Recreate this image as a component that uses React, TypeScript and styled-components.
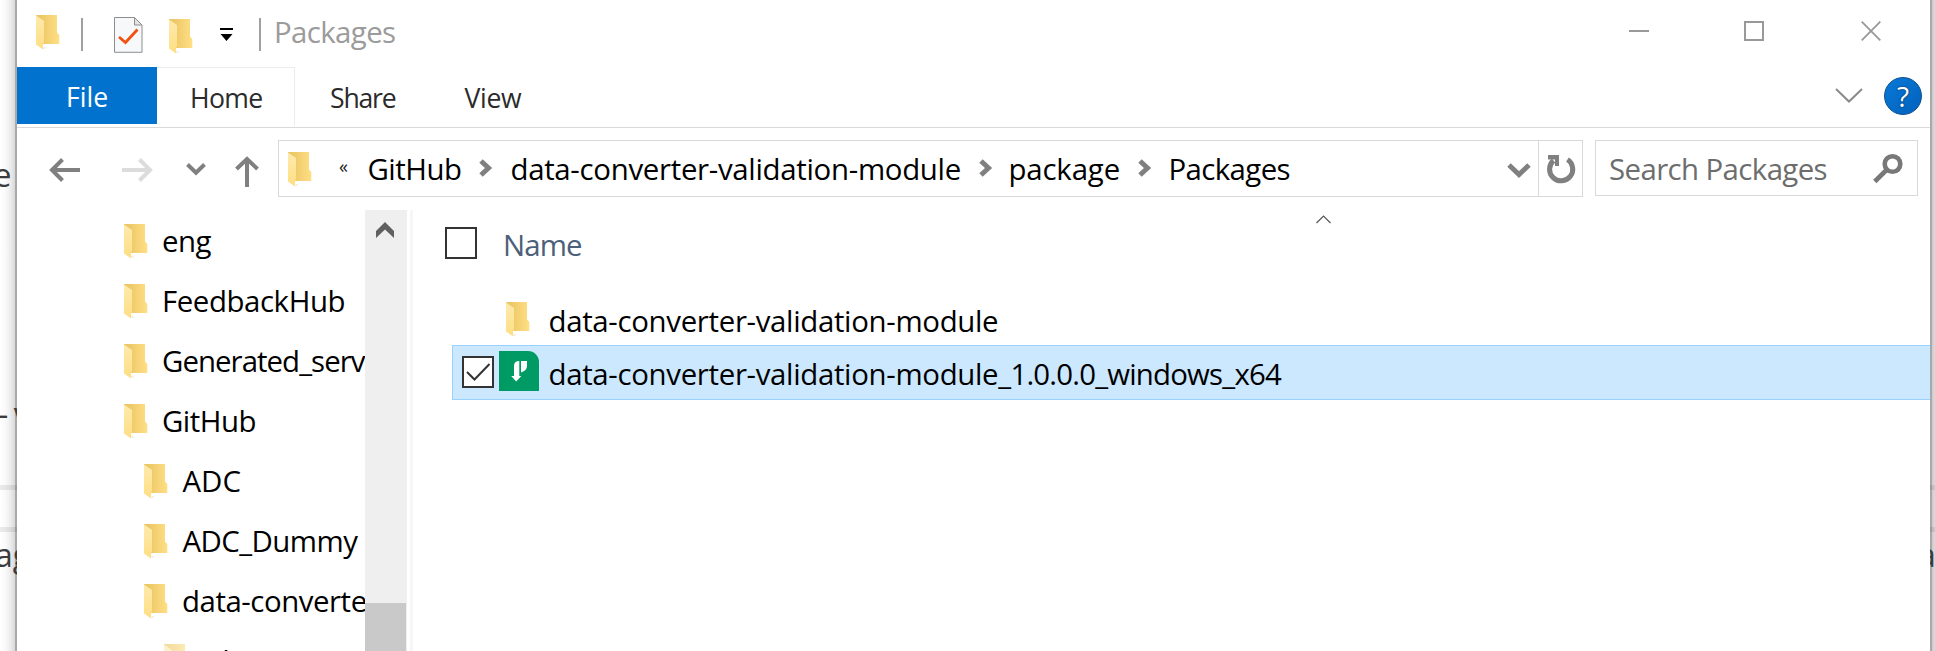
import React from "react";
import styled, { createGlobalStyle } from "styled-components";

const GlobalStyle = createGlobalStyle`
  * { box-sizing: border-box; }
  body {
    margin: 0;
    background: #fff;
    overflow: hidden;
    font-family: "Open Sans", "Noto Sans", sans-serif;
  }
`;

/* ---------- shared pieces ---------- */

type Place = { $left?: number; $top?: number };

const Icon = styled.svg<Place>`
  display: block;
  flex: none;
  overflow: visible;
  margin-left: ${(p) => p.$left ?? 0}px;
  margin-top: ${(p) => p.$top ?? 0}px;
`;

const Label = styled.span<Place & { $spacing?: number; $color?: string }>`
  display: block;
  flex: none;
  font-size: 29.4px;
  line-height: 40px;
  white-space: pre;
  color: ${(p) => p.$color ?? "#000"};
  letter-spacing: ${(p) => p.$spacing ?? 0}px;
  margin-left: ${(p) => p.$left ?? 0}px;
  margin-top: ${(p) => p.$top ?? 0}px;
`;

/* ---------- page behind the window ---------- */

const Desktop = styled.div`
  display: flex;
  width: 1935px;
  height: 651px;
  overflow: hidden;
`;

const Strip = styled.div<{ $side: "left" | "right" }>`
  flex: none;
  width: ${(p) => (p.$side === "left" ? 17 : 5)}px;
  height: 651px;
  overflow: hidden;
  display: flex;
  flex-direction: column;
  background: ${(p) =>
    p.$side === "left"
      ? "linear-gradient(to right, #ffffff 0, #fafafa 5px, #eeeeee 10px, #d8d8d8 15px, #a9a9a9 15px)"
      : "linear-gradient(to right, #a9a9a9 2px, #cbcbcb 2px, #dcdcdc 5px)"};
`;

const Fragment = styled.div<{ $top: number; $left: number; $gap?: number }>`
  display: flex;
  flex: none;
  gap: ${(p) => p.$gap ?? 0}px;
  height: 43px;
  margin-top: ${(p) => p.$top}px;
  margin-left: ${(p) => p.$left}px;
  font-size: 32px;
  line-height: 43px;
  color: #3c3c3c;
  white-space: pre;
`;

const Rule = styled.div<{ $top: number }>`
  flex: none;
  height: 5px;
  margin-top: ${(p) => p.$top}px;
  background: rgba(0, 0, 0, 0.08);
`;

/* ---------- window ---------- */

const Window = styled.div`
  flex: none;
  width: 1913px;
  height: 651px;
  background: #fff;
  display: flex;
  flex-direction: column;
`;

const TitleBar = styled.div`
  display: flex;
  align-items: flex-start;
  height: 67px;
  flex: none;
`;

const Separator = styled.div<{ $left: number }>`
  flex: none;
  width: 2px;
  height: 33px;
  margin: 18px 0 0 ${(p) => p.$left}px;
  background: #a0a0a0;
`;

const WindowControls = styled.div`
  display: flex;
  gap: 95px;
  margin: 21px 49px 0 auto;
`;

const Ribbon = styled.div`
  display: flex;
  align-items: flex-start;
  flex: none;
  height: 61px;
  border-bottom: 1px solid #d9d9d9;
`;

const Tab = styled.div<{
  $width: number;
  $pad: number;
  $kind?: "file" | "active";
  $spacing: number;
}>`
  flex: none;
  width: ${(p) => p.$width}px;
  height: ${(p) => (p.$kind === "file" ? 57 : 59)}px;
  padding-left: ${(p) => p.$pad}px;
  padding-top: ${(p) => (p.$kind ? 12 : 13)}px;
  background: ${(p) => (p.$kind === "file" ? "#0173cf" : "#fff")};
  color: ${(p) => (p.$kind === "file" ? "#fff" : "#2b2b2b")};
  border: 0 solid #ececec;
  border-width: ${(p) => (p.$kind === "active" ? "1px 1px 0 0" : "0")};
  font-size: 26.6px;
  line-height: 36px;
  letter-spacing: ${(p) => p.$spacing}px;
`;

const RibbonEnd = styled.div`
  display: flex;
  align-items: flex-start;
  margin: 10px 8px 0 auto;
`;

const Help = styled.div`
  width: 38px;
  height: 38px;
  margin-left: 21px;
  border-radius: 50%;
  border: 1px solid #0b4f8f;
  background: linear-gradient(135deg, #0a78d6, #0062bd);
  color: #fff;
  font-size: 28px;
  line-height: 36px;
  text-align: center;
  text-shadow: 0 0 2px #123a63, 0 0 1px #123a63;
`;

const NavBar = styled.div`
  display: flex;
  align-items: flex-start;
  flex: none;
  height: 82px;
  padding-top: 12px;
`;

const Address = styled.div`
  display: flex;
  align-items: flex-start;
  flex: none;
  width: 1305px;
  height: 57px;
  margin-left: 20px;
  border: 1px solid #d9d9d9;
`;

const Overflow = styled.span`
  flex: none;
  width: 14px;
  margin: 13px 0 0 27px;
  font-size: 18px;
  line-height: 24px;
  color: #222;
`;

const RefreshCell = styled.div`
  flex: none;
  width: 44px;
  height: 55px;
  margin-left: auto;
  border-left: 1px solid #d9d9d9;
`;

const Search = styled.div`
  display: flex;
  align-items: flex-start;
  flex: none;
  width: 323px;
  height: 56px;
  margin-left: 12px;
  border: 1px solid #d9d9d9;
`;

const Body = styled.div`
  display: flex;
  flex: 1;
  min-height: 0;
`;

const Tree = styled.div`
  flex: none;
  width: 347.5px;
  height: 441px;
  padding-top: 11px;
  overflow: hidden;
`;

const TreeRow = styled.div<{ $depth: number; $faded?: boolean }>`
  display: flex;
  align-items: flex-start;
  height: 60px;
  padding-left: ${(p) => 107 + p.$depth * 20}px;
  & > svg {
    opacity: ${(p) => (p.$faded ? 0.6 : 1)};
  }
`;

const ScrollBar = styled.div`
  flex: none;
  display: flex;
  flex-direction: column;
  width: 42.5px;
  background: #efefef;
`;

const ScrollThumb = styled.div`
  margin-top: auto;
  width: 41.5px;
  height: 48px;
  background: #c9c9c9;
`;

const Splitter = styled.div`
  flex: none;
  width: 3px;
  margin-left: 3px;
  background: #f6f6f6;
`;

const FileList = styled.div`
  flex: 1;
  min-width: 0;
`;

const ColumnHeader = styled.div`
  display: flex;
  align-items: flex-start;
  height: 81px;
  padding-left: 32px;
`;

const CheckBox = styled.div<Place>`
  flex: none;
  width: 32px;
  height: 32px;
  margin-left: ${(p) => p.$left ?? 0}px;
  margin-top: ${(p) => p.$top ?? 0}px;
  border: 2px solid #333;
  background: #fff;
`;

const FileRow = styled.div<{ $selected?: boolean }>`
  display: flex;
  align-items: flex-start;
  height: ${(p) => (p.$selected ? 55 : 54)}px;
  margin-left: 39px;
  border: 1px solid ${(p) => (p.$selected ? "#99d1ff" : "transparent")};
  border-right: 0;
  background: ${(p) => (p.$selected ? "#cce8ff" : "transparent")};
`;

/* ---------- icons ---------- */

const Folder = ({ left, top }: { left?: number; top?: number }) => (
  <Icon $left={left} $top={top} width="24" height="35" viewBox="0 0 24 35">
    <linearGradient id="folderBack" x1="0" y1="0" x2="1" y2="0">
      <stop offset="0.2" stopColor="#ecc766" />
      <stop offset="1" stopColor="#ffdf85" />
    </linearGradient>
    <linearGradient id="folderFlap" x1="0" y1="0" x2="0" y2="1">
      <stop offset="0" stopColor="#fdeaad" />
      <stop offset="1" stopColor="#ffde82" />
    </linearGradient>
    <path d="M7 34l4-1-3-1z" fill="#e8e8e8" />
    <path d="M0 0H21V17.5L23.3 20V29H6L0 4Z" fill="url(#folderBack)" />
    <path d="M0 .5L8 6V27.5L7 28.5V34.5L0 29.5Z" fill="url(#folderFlap)" />
  </Icon>
);

const Crumb = () => (
  <Icon $left={18} $top={18} width="14" height="18" viewBox="0 0 14 18">
    <path d="M2 2L9.5 9L2 16" fill="none" stroke="#808080" strokeWidth="5" />
  </Icon>
);

const PropertiesIcon = () => (
  <Icon $left={31} $top={17} width="29" height="36" viewBox="0 0 29 36">
    <path d="M.5 .5H20.5L28 8V35.3H.5Z" fill="#f6f8fa" stroke="#8e8e8e" />
    <path d="M20.5 .5V8H28Z" fill="#e3e3e3" stroke="#8e8e8e" />
    <path d="M5 20L11.5 25.5L23.5 12.5" fill="none" stroke="#f2500f" strokeWidth="2.8" />
  </Icon>
);

const PackageIcon = () => (
  <Icon $left={5} $top={5} width="40" height="40" viewBox="0 0 40 40">
    <path d="M0 0H29A11 11 0 0 1 40 11V40H0Z" fill="#009b64" />
    <path d="M20.3 10V25H22.3L17.2 30.5L12.2 25H15V15Q15 10 20.3 10Z" fill="#fff" />
    <path d="M22 10H28V15Q28 19.5 22 21.5Z" fill="#fff" />
  </Icon>
);

/* ---------- data ---------- */

const tree = [
  { name: "eng", depth: 0, spacing: -0.5 },
  { name: "FeedbackHub", depth: 0, spacing: -0.42 },
  { name: "Generated_serv", depth: 0, spacing: -0.95 },
  { name: "GitHub", depth: 0, spacing: -0.5 },
  { name: "ADC", depth: 1, spacing: 0, shift: 0.5 },
  { name: "ADC_Dummy", depth: 1, spacing: -0.55, shift: 0.5 },
  { name: "data-converte", depth: 1, spacing: -0.45 },
  { name: ".data", depth: 2, spacing: 0, shift: 2, faded: true },
];

export default function App() {
  return (
    <Desktop>
      <GlobalStyle />
      <Strip $side="left">
        <Fragment $top={153} $left={-6.5}>e</Fragment>
        <Fragment $top={196} $left={-2} $gap={5.5}>
          <span>-</span>
          <span>v</span>
        </Fragment>
        <Rule $top={50} />
        <Rule $top={37} />
        <Fragment $top={1} $left={-5}>ag</Fragment>
      </Strip>

      <Window>
        <TitleBar>
          <Folder left={19} top={15} />
          <Separator $left={21} />
          <PropertiesIcon />
          <Folder left={26} top={19} />
          <Icon $left={27} $top={28} width="13" height="13" viewBox="0 0 13 13">
            <path d="M0 0H13V2H0ZM.5 6H12.5L6.5 13Z" fill="#000" />
          </Icon>
          <Separator $left={26} />
          <Label $left={13} $top={12} $spacing={-0.61} $color="#9b9b9b">Packages</Label>
          <WindowControls>
            <Icon width="20" height="20">
              <path d="M0 10H20" stroke="#999" strokeWidth="2" />
            </Icon>
            <Icon width="20" height="20">
              <rect x="1" y="1" width="18" height="18" fill="none" stroke="#999" strokeWidth="2" />
            </Icon>
            <Icon $left={2} width="20" height="20">
              <path d="M.7 .7L19.3 19.3M19.3 .7L.7 19.3" stroke="#999" strokeWidth="1.8" />
            </Icon>
          </WindowControls>
        </TitleBar>

        <Ribbon>
          <Tab $width={140} $pad={49} $kind="file" $spacing={0}>File</Tab>
          <Tab $width={138} $pad={33} $kind="active" $spacing={-0.7}>Home</Tab>
          <Tab $width={134} $pad={35} $spacing={-1.2}>Share</Tab>
          <Tab $width={140} $pad={35.5} $spacing={-0.3}>View</Tab>
          <RibbonEnd>
            <Icon $top={11} width="28" height="15" viewBox="0 0 28 15">
              <path d="M1 1L14 13.5L27 1" fill="none" stroke="#8a8a8a" strokeWidth="2" />
            </Icon>
            <Help>?</Help>
          </RibbonEnd>
        </Ribbon>

        <NavBar>
          <Icon $left={32} $top={18} width="32" height="24" viewBox="0 0 32 24">
            <path d="M31 12H4M13.5 1.5L3 12L13.5 22.5" fill="none" stroke="#808080" strokeWidth="4" />
          </Icon>
          <Icon $left={41} $top={18} width="32" height="24" viewBox="0 0 32 24">
            <path d="M0 12H27M17.5 1.5L28 12L17.5 22.5" fill="none" stroke="#dcdcdc" strokeWidth="4" />
          </Icon>
          <Icon $left={32} $top={23} width="20" height="13" viewBox="0 0 20 13">
            <path d="M1.5 1.5L10 9.8L18.5 1.5" fill="none" stroke="#808080" strokeWidth="4" />
          </Icon>
          <Icon $left={28} $top={16} width="24" height="31" viewBox="0 0 24 31">
            <path d="M13 31V4M2.5 13L13 3L23.5 13" fill="none" stroke="#808080" strokeWidth="4" />
          </Icon>
          <Address>
            <Folder left={9} top={11} />
            <Overflow>«</Overflow>
            <Label $left={14.5} $top={8} $spacing={-0.5}>GitHub</Label>
            <Crumb />
            <Label $left={17} $top={8} $spacing={-0.3}>data-converter-validation-module</Label>
            <Crumb />
            <Label $left={15.5} $top={8} $spacing={-0.15}>package</Label>
            <Crumb />
            <Label $left={16.5} $top={8} $spacing={-0.61}>Packages</Label>
            <Icon $left={217} $top={22} width="24" height="15" viewBox="0 0 24 15">
              <path d="M2 2L12 11.5L22 2" fill="none" stroke="#808080" strokeWidth="5" />
            </Icon>
            <RefreshCell>
              <Icon $left={8} $top={14} width="28" height="29" viewBox="0 0 28 29">
                <path d="M6.5 5.5A11.6 11.6 0 1 0 20.5 4.5" fill="none" stroke="#808080" strokeWidth="5" />
                <path d="M1 0H12V11H8V4.5H1Z" fill="#808080" />
              </Icon>
            </RefreshCell>
          </Address>
          <Search>
            <Label $left={13} $top={8} $spacing={-0.6} $color="#6d6d6d">Search Packages</Label>
            <Icon $left={46} $top={13} width="30" height="30" viewBox="0 0 30 30">
              <circle cx="19.5" cy="10" r="7.8" fill="none" stroke="#787878" strokeWidth="4.6" />
              <path d="M14 15.5L1.8 27.5" stroke="#787878" strokeWidth="4.6" />
            </Icon>
          </Search>
        </NavBar>

        <Body>
          <Tree>
            {tree.map((n) => (
              <TreeRow key={n.name} $depth={n.depth} $faded={n.faded}>
                <Folder top={3} />
                <Label $left={14 + (n.shift ?? 0)} $spacing={n.spacing}>{n.name}</Label>
              </TreeRow>
            ))}
          </Tree>
          <ScrollBar>
            <Icon $left={11.5} $top={12} width="18" height="16" viewBox="0 0 18 16">
              <path d="M0 9L9 0L18 9V16L9 7.5L0 16Z" fill="#606060" />
            </Icon>
            <ScrollThumb />
          </ScrollBar>
          <Splitter />
          <FileList>
            <ColumnHeader>
              <CheckBox $top={17} />
              <Label $left={26} $top={15} $spacing={-0.9} $color="#4c607a">Name</Label>
              <Icon $left={734} $top={5} width="16" height="9" viewBox="0 0 16 9">
                <path d="M.5 8L7.5 1L14.5 8" fill="none" stroke="#555" strokeWidth="1.2" />
              </Icon>
            </ColumnHeader>
            <FileRow>
              <Folder left={53} top={10} />
              <Label $left={18.5} $top={9} $spacing={-0.32}>data-converter-validation-module</Label>
            </FileRow>
            <FileRow $selected>
              <CheckBox $left={9} $top={10}>
                <Icon width="28" height="28" viewBox="0 0 28 28">
                  <path d="M3 14L10.5 21.5L25.5 6" fill="none" stroke="#333" strokeWidth="2" />
                </Icon>
              </CheckBox>
              <PackageIcon />
              <Label $left={9.5} $top={8} $spacing={-0.32}>data-converter-validation-module</Label>
              <Label $top={8} $spacing={-0.8}>_1.0.0.0_windows_x64</Label>
            </FileRow>
          </FileList>
        </Body>
      </Window>

      <Strip $side="right">
        <Rule $top={485} />
        <Rule $top={37} />
        <Fragment $top={1} $left={-12}>a</Fragment>
      </Strip>
    </Desktop>
  );
}
